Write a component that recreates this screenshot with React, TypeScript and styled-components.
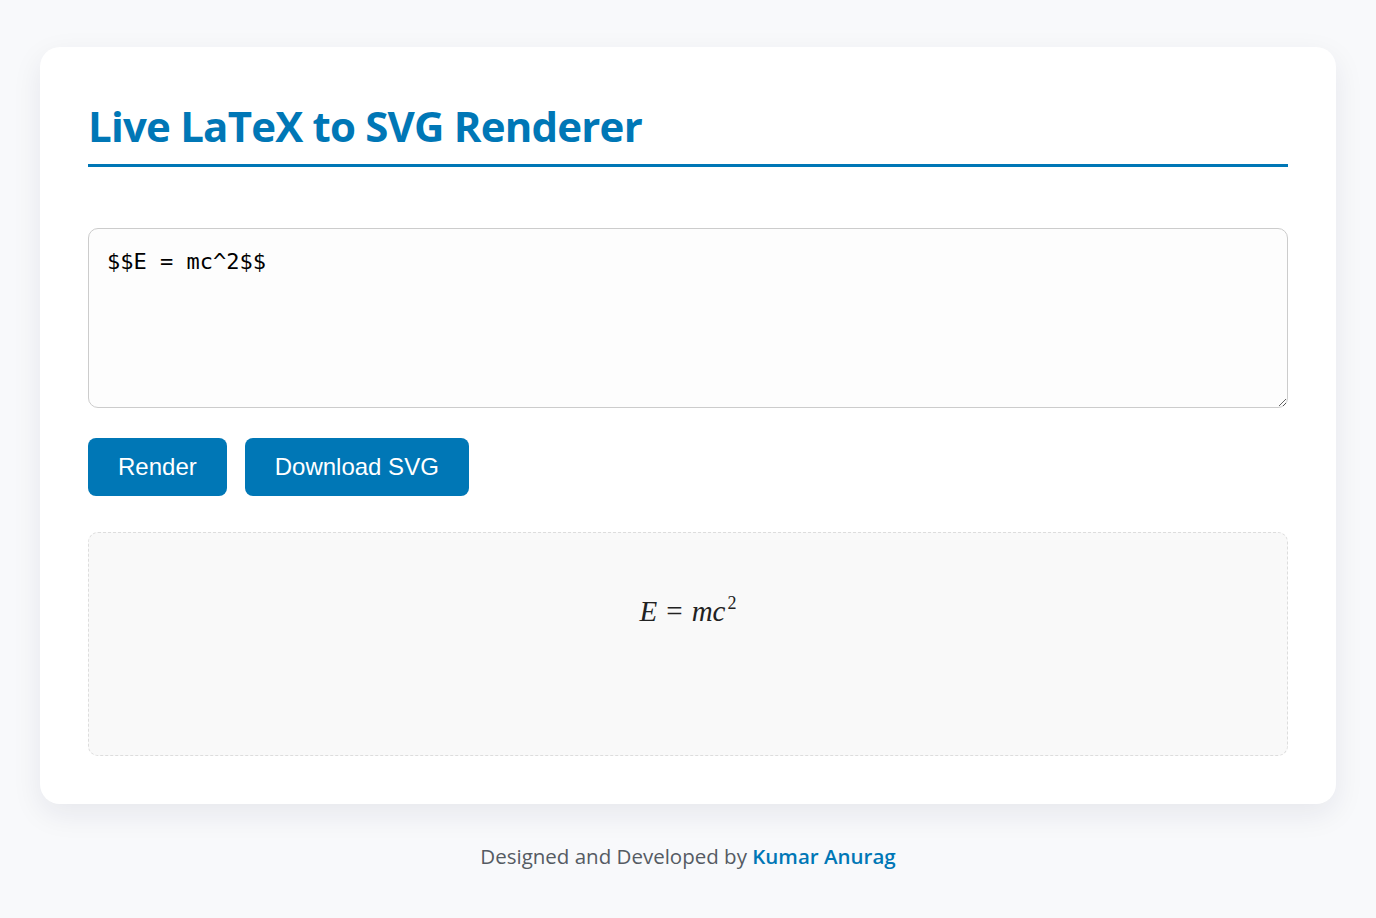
import React, { useState } from "react";
import styled, { createGlobalStyle } from "styled-components";

const GlobalStyle = createGlobalStyle`
  html, body {
    margin: 0;
    padding: 0;
    background: #f8f9fb;
    font-family: "Open Sans", "Noto Sans", sans-serif;
  }
  * { box-sizing: border-box; }
`;

const Page = styled.div`
  min-height: 918px;
  display: flex;
  flex-direction: column;
  align-items: stretch;
  padding: 47px 40px 0;
`;

const Card = styled.main`
  background: #ffffff;
  border-radius: 20px;
  padding: 48px;
  box-shadow: 0 10px 30px rgba(20, 30, 60, 0.08);
  display: flex;
  flex-direction: column;
`;

const Title = styled.h1`
  margin: 0;
  font-family: "Open Sans", "Noto Sans", sans-serif;
  font-weight: 700;
  font-size: 42px;
  line-height: 1.2;
  letter-spacing: -0.8px;
  color: #0077b6;
  padding: 6px 0 13px;
  border-bottom: 3px solid #0077b6;
`;

const Editor = styled.textarea`
  margin-top: 61px;
  width: 100%;
  height: 180px;
  padding: 19px 18px;
  border: 1px solid #cccccc;
  border-radius: 10px;
  background: #fdfdfd;
  font-family: "DejaVu Sans Mono", "Liberation Mono", monospace;
  font-size: 22px;
  line-height: 1.3;
  color: #000;
  resize: vertical;
  outline: none;
`;

const Actions = styled.div`
  display: flex;
  gap: 18px;
  margin-top: 30px;
`;

const Button = styled.button`
  font-family: "Liberation Sans", Arial, sans-serif;
  font-size: 24px;
  line-height: 28px;
  padding: 15px 30px;
  border: none;
  border-radius: 8px;
  background: #0077b6;
  color: #ffffff;
  cursor: pointer;
`;

const Preview = styled.section`
  margin-top: 36px;
  min-height: 224px;
  border: 1px dashed #dddddd;
  border-radius: 10px;
  background: #f9f9f9;
  padding: 58px 20px 20px;
  text-align: center;
`;

const Formula = styled.div`
  display: inline-block;
  font-family: "Liberation Serif", "DejaVu Serif", serif;
  font-size: 29px;
  line-height: 40px;
  color: #222;
`;

const Var = styled.span`
  font-style: italic;
`;

const Op = styled.span`
  margin: 0 9px;
`;

const Sup = styled.span`
  font-size: 18px;
  position: relative;
  top: -12px;
  margin-left: 2px;
`;

const Footer = styled.footer`
  text-align: center;
  margin-top: 38px;
  font-family: "Open Sans", "Noto Sans", sans-serif;
  font-size: 20.5px;
  color: #555b63;
`;

const Author = styled.a`
  color: #0077b6;
  font-weight: 600;
  text-decoration: none;
`;

export default function App() {
  const [src, setSrc] = useState("$$E = mc^2$$");
  return (
    <>
      <GlobalStyle />
      <Page>
        <Card>
          <Title>Live LaTeX to SVG Renderer</Title>
          <Editor value={src} onChange={(e) => setSrc(e.target.value)} spellCheck={false} />
          <Actions>
            <Button>Render</Button>
            <Button>Download SVG</Button>
          </Actions>
          <Preview>
            <Formula>
              <Var>E</Var>
              <Op>=</Op>
              <Var>mc</Var>
              <Sup>2</Sup>
            </Formula>
          </Preview>
        </Card>
        <Footer>
          Designed and Developed by <Author href="#">Kumar Anurag</Author>
        </Footer>
      </Page>
    </>
  );
}
